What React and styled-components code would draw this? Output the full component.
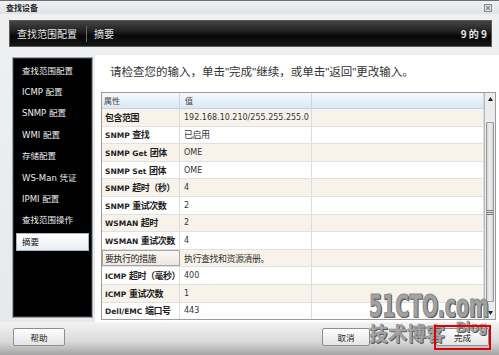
import React from 'react';
import styled, { createGlobalStyle } from 'styled-components';

const GlobalStyle = createGlobalStyle`
  html, body {
    margin: 0;
    padding: 0;
    background: #d9dde1;
  }
  body {
    font-family: "DejaVu Sans", "Noto Sans CJK SC", sans-serif;
  }
`;

const Window = styled.div`
  position: relative;
  width: 499px;
  height: 355px;
  overflow: hidden;
  display: flex;
  flex-direction: column;
  background: linear-gradient(#eef0f2, #e6e9ec);
`;

const TitleBar = styled.div`
  height: 14px;
  box-sizing: border-box;
  border-top: 1px solid #6c6f73;
  background: linear-gradient(#eff1f3, #dfe3e7);
  display: flex;
  align-items: center;
  justify-content: space-between;
  padding: 0 7px 0 6px;
  font-family: "Noto Sans CJK SC", sans-serif;
  font-weight: 700;
  font-size: 8px;
  color: #222;
`;

const Header = styled.div`
  height: 27px;
  box-sizing: border-box;
  margin: 6px 7px 0 9px;
  display: flex;
  align-items: center;
  padding: 0 4px 0 7px;
  border: 1px solid #5a5a5a;
  background: linear-gradient(#444 0%, #222 40%, #070707 60%, #151515 100%);
  color: #e4e4e4;
  font-family: "Noto Sans CJK SC", sans-serif;
  font-size: 10px;
`;

const HeaderTab = styled.span`
  line-height: 16px;
  padding: ${(p) => (p.$first ? '0 9px 0 0' : '0 0 0 7px')};
  border-right: ${(p) => (p.$first ? '1px solid #6a6a6a' : 'none')};
`;

const Counter = styled.span`
  margin-left: auto;
  font-weight: 700;
`;

const Body = styled.div`
  display: flex;
  height: 267px;
  margin-top: 8px;
`;

const Nav = styled.div`
  width: 81px;
  box-sizing: border-box;
  margin: 2px 0 4px 12px;
  padding-top: 2px;
  background: #000;
  border: 1px solid #9ca2a8;
  box-shadow: inset 0 0 0 1px #2c2c2c;
`;

const NavItem = styled.div`
  height: 21.4px;
  display: flex;
  align-items: center;
  padding: 0 3px;
`;

const NavLabel = styled.div`
  flex: 1;
  height: 18px;
  box-sizing: border-box;
  padding-left: 5px;
  line-height: 17px;
  font-size: 8.5px;
  white-space: nowrap;
  color: ${(p) => (p.$active ? '#111' : '#ededed')};
  background: ${(p) => (p.$active ? 'linear-gradient(#ffffff, #e7edf3)' : 'transparent')};
  border: 1px solid ${(p) => (p.$active ? '#a9b6c2' : 'transparent')};
`;

const Content = styled.div`
  flex: 1;
  margin-left: 2px;
  padding-right: 3px;
  background: #fff;
  display: flex;
  flex-direction: column;
`;

const Instruction = styled.div`
  height: 37px;
  box-sizing: border-box;
  padding: 9px 0 0 15px;
  font-family: "Liberation Sans", "Noto Sans CJK SC", sans-serif;
  font-size: 11.5px;
  line-height: 16px;
  color: #333;
`;

const TableFrame = styled.div`
  height: 228px;
  margin-left: 6px;
  box-sizing: border-box;
  border: 1px solid #9c9c9c;
  display: flex;
  overflow: hidden;
`;

const Grid = styled.div`
  flex: 1;
  display: flex;
  flex-direction: column;
`;

const HeadRow = styled.div`
  display: grid;
  grid-template-columns: 78px 132px 1fr;
  height: 15px;
  flex-shrink: 0;
  background: linear-gradient(#f5f9fd, #d9e7f4);
  border-bottom: 1px solid #c4d3e2;
`;

const HeadCell = styled.div`
  display: flex;
  align-items: center;
  padding-left: ${(p) => p.$pad || 2}px;
  border-right: 1px solid #cbd7e3;
  font-family: "Noto Sans CJK SC", sans-serif;
  font-size: 8px;
  color: #444;
`;

const Row = styled.div`
  display: grid;
  grid-template-columns: 78px 132px 1fr;
  height: 17.6px;
  flex-shrink: 0;
  box-sizing: border-box;
  background: ${(p) => (p.$odd ? '#f8f3ea' : '#fff')};
  border-bottom: 1px solid #e0e0e0;
`;

const Cell = styled.div`
  display: flex;
  align-items: center;
  padding-left: 4px;
  border-right: 1px solid #dcdcdc;
  white-space: nowrap;
  overflow: hidden;
  font-size: 8px;
  color: #333;
`;

const LabelCell = styled(Cell)`
  font-weight: ${(p) => (p.$boxed ? 400 : 700)};
  font-size: 7.5px;
  color: #1e1e1e;
  padding-left: ${(p) => (p.$boxed ? 2 : 3)}px;
  border: ${(p) => (p.$boxed ? '1px solid #a5a5a5' : 'none')};
  border-right: 1px solid ${(p) => (p.$boxed ? '#a5a5a5' : '#dcdcdc')};
  background: ${(p) => (p.$boxed ? 'linear-gradient(#fbf8f3, #ede8df)' : 'transparent')};
`;

const Cjk = styled.span`
  font-family: "Noto Sans CJK SC", sans-serif;
  font-size: 9px;
  letter-spacing: -0.5px;
`;

const Scrollbar = styled.div`
  width: 10px;
  display: flex;
  flex-direction: column;
  border-left: 1px solid #b9b9b9;
  background: #ececec;
`;

const ArrowBtn = styled.div`
  height: 12px;
  flex-shrink: 0;
  display: flex;
  align-items: center;
  justify-content: center;
`;

const Track = styled.div`
  flex: 1;
  padding-top: 17px;
`;

const Thumb = styled.div`
  height: 180px;
  box-sizing: border-box;
  margin: 0 1px;
  border: 1px solid #9a9a9a;
  border-radius: 1px;
  background: linear-gradient(90deg, #d4d4d4, #f2f2f2 50%, #d0d0d0);
  display: flex;
  align-items: center;
  justify-content: center;
`;

const Grip = styled.div`
  width: 6px;
  height: 5px;
  background: repeating-linear-gradient(#777 0 1px, transparent 1px 2px);
`;

const BottomBar = styled.div`
  flex: 1;
  display: flex;
  align-items: flex-start;
  padding: 6px 10px 0 13px;
  background: linear-gradient(#f3f3f3, #dadada 60%, #a3a3a3);
`;

const Button = styled.button`
  width: ${(p) => p.$w}px;
  height: 18px;
  margin-left: ${(p) => p.$ml || 0}px;
  padding: 0;
  border: 1px solid #8e8e8e;
  border-radius: 2px;
  background: linear-gradient(#fefefe, #e4e4e4);
  font-family: "Noto Sans CJK SC", sans-serif;
  font-size: 8.5px;
  color: #222;
`;

const Highlight = styled.div`
  position: absolute;
  left: 434px;
  top: 325px;
  width: 57px;
  height: 25px;
  box-sizing: border-box;
  border: 2px solid #e40000;
  pointer-events: none;
`;

const MarkSite = styled.div`
  position: absolute;
  left: 369px;
  top: 290px;
  font-family: "DejaVu Sans", sans-serif;
  font-weight: 700;
  font-size: 32px;
  line-height: 1;
  color: #a3a3a3;
  -webkit-text-stroke: 1.2px #8c8c8c;
  transform: scaleX(0.59);
  transform-origin: left top;
  text-shadow: 1px 1px 0 #4a4a4a, 2px 1px 0 #5a5a5a;
  white-space: nowrap;
`;

const MarkBlog = styled.div`
  position: absolute;
  left: ${(p) => p.$x}px;
  top: ${(p) => p.$y}px;
  font-family: ${(p) => (p.$cjk ? '"Noto Sans CJK SC"' : '"Liberation Sans"')}, sans-serif;
  font-weight: 700;
  font-size: ${(p) => p.$size}px;
  line-height: 1;
  color: #a6a6a6;
  -webkit-text-stroke: 0.5px #8c8c8c;
  text-shadow: 1px 1px 0 #4a4a4a;
  white-space: nowrap;
`;

const navItems = [
  '查找范围配置',
  'ICMP 配置',
  'SNMP 配置',
  'WMI 配置',
  '存储配置',
  'WS-Man 凭证',
  'IPMI 配置',
  '查找范围操作',
  '摘要',
];

const rows = [
  ['包含范围', '192.168.10.210/255.255.255.0'],
  ['SNMP 查找', '已启用'],
  ['SNMP Get 团体', 'OME'],
  ['SNMP Set 团体', 'OME'],
  ['SNMP 超时（秒）', '4'],
  ['SNMP 重试次数', '2'],
  ['WSMAN 超时', '2'],
  ['WSMAN 重试次数', '4'],
  ['要执行的措施', '执行查找和资源清册。', true],
  ['ICMP 超时（毫秒）', '400'],
  ['ICMP 重试次数', '1'],
  ['Dell/EMC 端口号', '443'],
];

// wrap runs of CJK characters so they get the larger CJK size
const CJK_RUN = /([\u3000-\u303f\u4e00-\u9fff\uff00-\uffef]+)/;
const mixed = (text) => (
  <span>
    {text
      .split(CJK_RUN)
      .filter(Boolean)
      .map((part, i) => (CJK_RUN.test(part) ? <Cjk key={i}>{part}</Cjk> : part))}
  </span>
);

const CloseIcon = () => (
  <svg width="8" height="8" viewBox="0 0 8 8">
    <rect x="0.5" y="0.5" width="7" height="7" fill="#d8dadd" stroke="#8a8d91" />
    <path d="M2 2L6 6M6 2L2 6" stroke="#6d7075" strokeWidth="1" />
  </svg>
);

const Arrow = ({ down }) => (
  <svg width="5" height="4" viewBox="0 0 5 4">
    <path d={down ? 'M0 0H5L2.5 4Z' : 'M0 4H5L2.5 0Z'} fill="#222" />
  </svg>
);

export default function App() {
  return (
    <>
      <GlobalStyle />
      <Window>
        <TitleBar>
          <span>查找设备</span>
          <CloseIcon />
        </TitleBar>
        <Header>
          <HeaderTab $first>查找范围配置</HeaderTab>
          <HeaderTab>摘要</HeaderTab>
          <Counter>9 的 9</Counter>
        </Header>
        <Body>
          <Nav>
            {navItems.map((item, i) => (
              <NavItem key={item}>
                <NavLabel $active={i === navItems.length - 1}>{item}</NavLabel>
              </NavItem>
            ))}
          </Nav>
          <Content>
            <Instruction>请检查您的输入，单击"完成"继续，或单击"返回"更改输入。</Instruction>
            <TableFrame>
              <Grid>
                <HeadRow>
                  <HeadCell>属性</HeadCell>
                  <HeadCell $pad={5}>值</HeadCell>
                  <HeadCell />
                </HeadRow>
                {rows.map(([label, value, boxed], i) => (
                  <Row key={label} $odd={i % 2 === 0}>
                    <LabelCell $boxed={boxed}>{mixed(label)}</LabelCell>
                    <Cell>{mixed(value)}</Cell>
                    <Cell />
                  </Row>
                ))}
              </Grid>
              <Scrollbar>
                <ArrowBtn>
                  <Arrow />
                </ArrowBtn>
                <Track>
                  <Thumb>
                    <Grip />
                  </Thumb>
                </Track>
                <ArrowBtn>
                  <Arrow down />
                </ArrowBtn>
              </Scrollbar>
            </TableFrame>
          </Content>
        </Body>
        <BottomBar>
          <Button $w={52}>帮助</Button>
          <Button $w={48} $ml={257}>取消</Button>
          <Button $w={53} $ml={66}>完成</Button>
        </BottomBar>
        <MarkSite>51CTO.com</MarkSite>
        <MarkBlog $cjk $x={369} $y={323} $size={19}>技术博客</MarkBlog>
        <MarkBlog $x={456} $y={320} $size={14}>Blog</MarkBlog>
        <Highlight />
      </Window>
    </>
  );
}
